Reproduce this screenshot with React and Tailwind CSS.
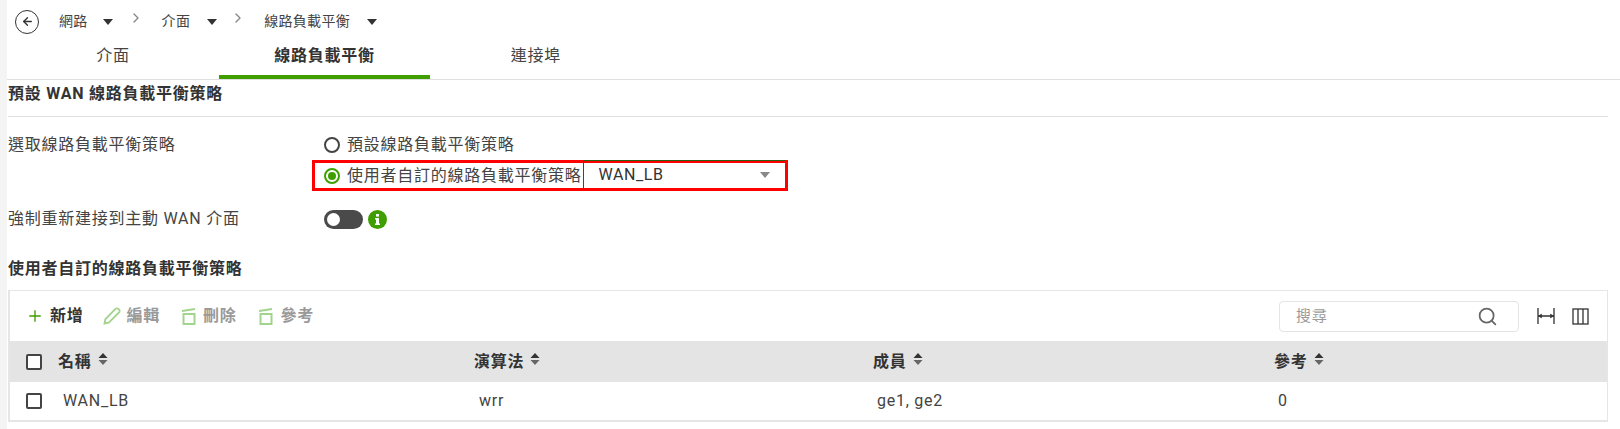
import { ArrowLeft, ChevronRight, Plus, Search } from 'lucide-react'

const FONT = "font-['Roboto','Noto_Sans_CJK_TC',sans-serif]"
const COLS = 'grid grid-cols-[48px_416px_399px_401px_1fr]'

function Caret({ className = '' }) {
  return (
    <svg width="10" height="6" viewBox="0 0 10 6" className={className}>
      <path d="M0 0h10L5 6z" fill="currentColor" />
    </svg>
  )
}

function SortIcon() {
  return (
    <svg width="10" height="12" viewBox="0 0 10 12" className="text-[#333] mb-[5px]">
      <path d="M5 0l4.500 5h-9z" fill="currentColor" />
      <path d="M5 12l4.500-5h-9z" fill="#666" />
    </svg>
  )
}

function TrashIcon() {
  return (
    <svg width="16" height="18" viewBox="0 0 16 18" fill="none" stroke="#a3d48e" strokeWidth="2">
      <path d="M2.500 7h11v10h-11z" />
      <path d="M1 4l13-2" />
    </svg>
  )
}

function PencilIcon() {
  return (
    <svg width="18" height="18" viewBox="0 0 18 18" fill="none" stroke="#a3d48e" strokeWidth="1.800">
      <path d="M1.500 16.500l.8-4.200L12.500 2a2 2 0 0 1 3 0l.5.5a2 2 0 0 1 0 3L5.700 15.700z" />
    </svg>
  )
}

function Checkbox() {
  return <span className="block w-4 h-4 rounded-[2px] border-2 border-[#444] bg-white"></span>
}

function Crumb({ label, className }) {
  return (
    <div className={`flex items-center ${className}`}>
      <span className="text-[14px] tracking-[0.3px] text-[#444]">{label}</span>
    </div>
  )
}

export default function App() {
  return (
    <div className={`flex w-[1620px] h-[429px] overflow-hidden bg-white text-[16px] tracking-[0.75px] text-[#333] ${FONT}`}>
      <div className="w-[7px] shrink-0 bg-[#f4f4f4]"></div>
      <div className="flex-1 min-w-0">
        {/* breadcrumb */}
        <div className="flex items-center h-[42px] pl-[8px] pt-[1px]">
          <span className="flex items-center justify-center w-[24px] h-[24px] rounded-full border border-[#333]">
            <ArrowLeft size={13} strokeWidth={2.500} className="text-[#333]" />
          </span>
          <Crumb label="網路" className="ml-[20px]" />
          <Caret className="ml-[15px] text-[#333]" />
          <ChevronRight size={16} className="ml-[15px] mb-[7px] text-[#888]" />
          <Crumb label="介面" className="ml-[18px]" />
          <Caret className="ml-[17px] text-[#333]" />
          <ChevronRight size={16} className="ml-[13px] mb-[7px] text-[#888]" />
          <Crumb label="線路負載平衡" className="ml-[18px]" />
          <Caret className="ml-[17px] text-[#333]" />
        </div>

        {/* tabs */}
        <div className="flex h-[38px] border-b border-[#e0e0e0]">
          <div className="w-[212px] flex items-start justify-center pt-[2px] text-[#444]">介面</div>
          <div className="w-[211px] flex items-start justify-center pt-[2px] font-bold text-[#333] border-b-4 border-[#3f9e00]">線路負載平衡</div>
          <div className="w-[212px] flex items-start justify-center pt-[2px] text-[#444]">連接埠</div>
        </div>

        {/* default policy */}
        <div className="pr-[12px] pl-[1px]">
          <div className="h-[37px] border-b border-[#e0e0e0] pt-[2px] leading-[24px] font-bold text-[#333]">預設 WAN 線路負載平衡策略</div>

          <div className="flex mt-[16px]">
            <div className="w-[309px] leading-[24px] text-[#444]">選取線路負載平衡策略</div>
            <div>
              <label className="flex items-center h-[24px] pl-[7px]">
                <span className="w-[16px] h-[16px] rounded-full border-2 border-[#444]"></span>
                <span className="ml-[7px] text-[#444]">預設線路負載平衡策略</span>
              </label>
              <div className="flex items-stretch w-[476px] h-[31px] -ml-[5px] mt-[3px] border-[3px] border-[#f00]">
                <span className="flex items-center pl-[9px]">
                  <span className="flex items-center justify-center w-[16px] h-[16px] rounded-full border-2 border-[#3f9e00]">
                    <span className="block w-[8px] h-[8px] rounded-full bg-[#3f9e00]"></span>
                  </span>
                  <span className="ml-[7px] whitespace-nowrap text-[#444]">使用者自訂的線路負載平衡策略</span>
                </span>
                <div className="flex-1 flex items-center justify-between ml-[1px] pl-[15px] pr-[15px] border-l border-[#2a5d12] -mt-[3px] border-t">
                  <span className="text-[#333] tracking-[0.6px]">WAN_LB</span>
                  <Caret className="text-[#888] mt-[1px]" />
                </div>
              </div>
            </div>
          </div>

          <div className="flex items-center mt-[16px] h-[24px]">
            <div className="w-[316px] text-[#444]">強制重新建接到主動 WAN 介面</div>
            <span className="flex items-center w-[39px] h-[19px] pl-[3px] rounded-full bg-[#4a4a4a]">
              <span className="block w-[13px] h-[13px] rounded-full bg-white"></span>
            </span>
            <span className="flex items-center justify-center w-[19px] h-[19px] ml-[5px] rounded-full bg-[#3f9e00] text-white">
              <svg width="5" height="11" viewBox="0 0 5 11" fill="currentColor">
                <rect x="1" y="0" width="3" height="2.600" />
                <path d="M0 4h4v5.500h1V11H0V9.500h1V5.500H0z" />
              </svg>
            </span>
          </div>

          {/* custom policy list */}
          <div className="mt-[26px] leading-[24px] font-bold text-[#333]">使用者自訂的線路負載平衡策略</div>

          <div className="mt-[9px] border-2 border-[#e6e6e6] border-t border-r">
            <div className="flex items-center justify-between h-[50px] pl-[16px] pr-[18px]">
              <div className="flex items-center">
                <Plus size={18} strokeWidth={1.800} className="text-[#3f9e00]" />
                <span className="ml-[6px] font-bold text-[#333]">新增</span>
                <span className="ml-[19px]"><PencilIcon /></span>
                <span className="ml-[6px] font-bold text-[#999]">編輯</span>
                <span className="ml-[21px]"><TrashIcon /></span>
                <span className="ml-[6px] font-bold text-[#999]">刪除</span>
                <span className="ml-[21px]"><TrashIcon /></span>
                <span className="ml-[7px] font-bold text-[#999]">參考</span>
              </div>
              <div className="flex items-center">
                <div className="flex items-center justify-between w-[240px] h-[31px] pl-[16px] pr-[20px] rounded-[4px] border border-[#e4e4e4]">
                  <span className="text-[15px] text-[#9a9a9a]">搜尋</span>
                  <Search size={21} strokeWidth={2} className="text-[#666]" />
                </div>
                <svg width="18" height="18" viewBox="0 0 18 18" fill="none" stroke="#333" className="ml-[18px]">
                  <path d="M1 1v16M17 1v16M1.500 9h15" strokeWidth="1.300" />
                  <path d="M1.500 9l3-2v4zM16.500 9l-3-2v4z" fill="#333" strokeWidth="0.500" />
                </svg>
                <svg width="17" height="17" viewBox="0 0 17 17" fill="none" stroke="#333" strokeWidth="1.300" className="ml-[17px]">
                  <rect x="1" y="1" width="15" height="15" />
                  <path d="M6 1v15M11 1v15" />
                </svg>
              </div>
            </div>
            <div className={`${COLS} items-center h-[41px] bg-[#e4e4e4] font-bold text-[#333]`}>
              <span className="pl-[16px]"><Checkbox /></span>
              <span className="flex items-center gap-[6px]">名稱 <SortIcon /></span>
              <span className="flex items-center gap-[6px]">演算法 <SortIcon /></span>
              <span className="flex items-center gap-[6px]">成員 <SortIcon /></span>
              <span className="flex items-center gap-[6px]">參考 <SortIcon /></span>
            </div>
            <div className={`${COLS} items-center h-[38px] text-[#444]`}>
              <span className="pl-[16px]"><Checkbox /></span>
              <span className="pl-[5px]">WAN_LB</span>
              <span className="pl-[5px]">wrr</span>
              <span className="pl-[4px]">ge1, ge2</span>
              <span className="pl-[4px]">0</span>
            </div>
          </div>
        </div>
      </div>
    </div>
  )
}
